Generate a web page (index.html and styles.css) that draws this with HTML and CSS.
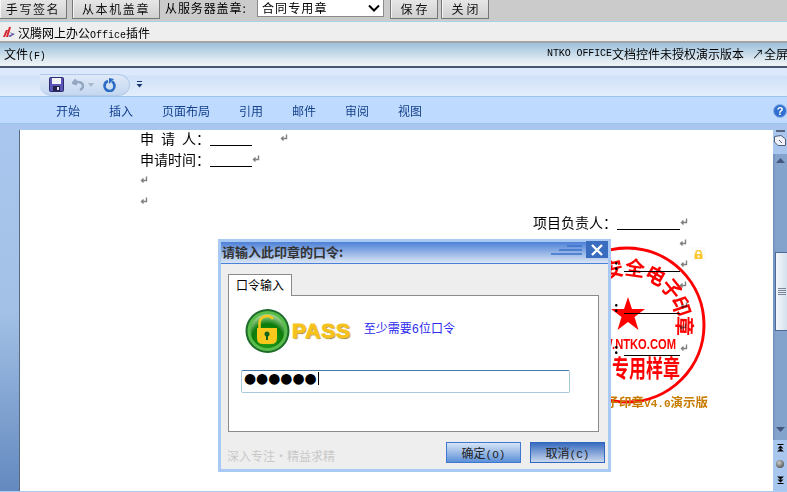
FILE: index.html
```html
<!DOCTYPE html>
<html lang="zh">
<head>
<meta charset="utf-8">
<title>汉腾网上办公Office插件</title>
<link rel="stylesheet" href="styles.css">
</head>
<body>
<svg class="defs" width="0" height="0" aria-hidden="true">
  <symbol id="ret" viewBox="0 0 8 8"><path d="M6.500 0.500V4.500H1.500M3.500 2.500L1.500 4.500L3.500 6.500" fill="none" stroke="#808080" stroke-width="1.400"/></symbol>
</svg>
<div class="page">
  <header class="toolbar">
    <button class="tb-btn b1">手写签名</button>
    <button class="tb-btn b2">从本机盖章</button>
    <span class="tb-label">从服务器盖章:</span>
    <div class="tb-select"><span>合同专用章</span>
      <svg class="chev" width="12" height="8" viewBox="0 0 12 8"><path d="M1 1.500L6 6.500L11 1.500" fill="none" stroke="#000" stroke-width="2"/></svg>
    </div>
    <button class="tb-btn b3">保存</button>
    <button class="tb-btn b3">关闭</button>
  </header>
  <div class="titlebar">
    <svg width="14" height="12" viewBox="0 0 14 12"><path d="M1 11L4 4L6 4L3 11Z" fill="#d8232a"/><path d="M4 11L7 1L9 1L6 11Z" fill="#d8232a"/><path d="M7 6L13 8L8 11L6 10L10 8Z" fill="#6a5aa8"/></svg>
    <span>汉腾网上办公<span class="mono">Office</span>插件</span>
  </div>
  <nav class="menubar">
    <span>文件<span class="mono sm">(F)</span></span>
    <span class="menu-right"><span class="mono">NTKO OFFICE</span>文档控件未授权演示版本<span class="fs">↗全屏</span></span>
  </nav>
  <div class="qat">
    <div class="qat-pill">
      <svg width="15" height="15" viewBox="0 0 15 15"><rect x="0.500" y="0.500" width="14" height="14" rx="1" fill="#5b55b5" stroke="#2a2a70"/><rect x="3" y="1" width="9" height="6" fill="#f2f4fa"/><rect x="4" y="9" width="7" height="5" fill="#22224a"/><rect x="8" y="10" width="2" height="3" fill="#e8e8f2"/></svg>
      <svg class="undo" width="13" height="13" viewBox="0 0 13 13"><path d="M4 1.500L1 5L5 6.500M1.500 5C6 3 11 4 11 8C11 10 10 11 8 12" fill="none" stroke="#93a6c2" stroke-width="2.400"/></svg>
      <svg class="caret" width="6" height="4" viewBox="0 0 6 4"><path d="M0 0H6L3 4Z" fill="#a9b7cc"/></svg>
      <svg class="redo" width="14" height="14" viewBox="0 0 14 14"><path d="M5 3C2 4 1.500 6 1.500 8A5 5 0 0 0 11.500 8C11.500 6 10.500 4.500 9 3.500" fill="none" stroke="#2b6bc4" stroke-width="2.600"/><path d="M6 0V6L11 1Z" fill="#2b6bc4"/></svg>
    </div>
    <svg class="qat-more" width="7" height="7" viewBox="0 0 7 7"><path d="M1 0.500H6" stroke="#1d3a70"/><path d="M0.500 3H6.500L3.500 6.500Z" fill="#1d3a70"/></svg>
  </div>
  <div class="tabs">
    <span class="tab t1">开始</span>
    <span class="tab t2">插入</span>
    <span class="tab t3">页面布局</span>
    <span class="tab t4">引用</span>
    <span class="tab t4">邮件</span>
    <span class="tab t4">审阅</span>
    <span class="tab t4">视图</span>
    <svg class="help" width="14" height="14" viewBox="0 0 14 14"><circle cx="7" cy="7" r="6.500" fill="#2f6fd0" stroke="#8fb2e4"/><text x="7" y="11" text-anchor="middle" class="help-q">?</text></svg>
  </div>
  <div class="ruler-strip"></div>
  <main class="workspace">
    <div class="margin"></div>
    <div class="doc">
      <div class="row"><span class="spaced">申 请 人：</span><span class="blank w42"></span><svg class="ret r-gap"><use href="#ret"/></svg></div>
      <div class="row"><span>申请时间：</span><span class="blank w42"></span><svg class="ret"><use href="#ret"/></svg></div>
      <div class="row"><svg class="ret"><use href="#ret"/></svg></div>
      <div class="row"><svg class="ret"><use href="#ret"/></svg></div>
      <div class="row right"><span>项目负责人：</span><span class="blank w63"></span><svg class="ret"><use href="#ret"/></svg></div>
      <div class="row far"><svg class="ret"><use href="#ret"/></svg></div>
      <div class="row line-row"><span class="bold-colon">:</span><span class="blank w56"></span><svg class="ret"><use href="#ret"/></svg></div>
      <div class="row far"><svg class="ret"><use href="#ret"/></svg></div>
      <div class="row line-row"><span class="bold-colon">:</span><span class="blank w56"></span><svg class="ret"><use href="#ret"/></svg></div>
      <div class="row far"><svg class="ret"><use href="#ret"/></svg></div>
      <div class="row line-row"><span class="bold-colon">:</span><span class="blank w56"></span><svg class="ret"><use href="#ret"/></svg></div>
    </div>
    <aside class="scrollbar">
      <div class="split"><span class="split-bar"></span>
        <svg width="12" height="11" viewBox="0 0 12 11"><path d="M0.500 1.500L7 0.500L11.500 4V10.500H4L0.500 7Z" fill="#eef2f8" stroke="#50607a"/><path d="M5 5L8 8" stroke="#50607a"/></svg>
      </div>
      <div class="sb-track">
        <svg class="sb-up" width="9" height="5" viewBox="0 0 9 5"><path d="M0 5L4.500 0L9 5Z" fill="#45577f"/></svg>
        <div class="sb-thumb"><i></i><i></i><i></i><i></i></div>
        <svg class="sb-down" width="9" height="5" viewBox="0 0 9 5"><path d="M0 0L4.500 5L9 0Z" fill="#45577f"/></svg>
      </div>
      <div class="sb-browse">
        <svg width="7" height="8" viewBox="0 0 7 8"><path d="M0.500 0.500H6.500" stroke="#000"/><path d="M3.500 1.500L0.500 4.500H6.500ZM3.500 4.500L0 7.500H7Z" fill="#000"/></svg>
        <span class="sb-dot"></span>
        <svg width="7" height="8" viewBox="0 0 7 8"><path d="M0.500 7.500H6.500" stroke="#000"/><path d="M3.500 6.500L0.500 3.500H6.500ZM3.500 3.500L0 0.500H7Z" fill="#000"/></svg>
      </div>
    </aside>
  </main>
  <svg class="stamp" width="180" height="175" viewBox="537 240 180 175">
    <circle cx="627" cy="325" r="77" fill="none" stroke="#f00" stroke-width="3"/>
    <text class="st-arc" x="627" y="275" text-anchor="middle" transform="rotate(-14 627 325)">安</text>
    <text class="st-arc" x="627" y="275" text-anchor="middle" transform="rotate(8 627 325)">全</text>
    <text class="st-arc" x="627" y="275" text-anchor="middle" transform="rotate(30 627 325)">电</text>
    <text class="st-arc" x="627" y="275" text-anchor="middle" transform="rotate(51 627 325)">子</text>
    <text class="st-arc" x="627" y="275" text-anchor="middle" transform="rotate(71 627 325)">印</text>
    <text class="st-arc" x="627" y="275" text-anchor="middle" transform="rotate(91 627 325)">章</text>
    <path d="M628 297L632 309H645L634.500 317L638.500 330L628 322L617.500 330L621.500 317L611 309H624Z" fill="#f00"/>
    <text x="581" y="349" class="st-com" textLength="95" lengthAdjust="spacingAndGlyphs">WWW.NTKO.COM</text>
    <text x="612" y="377" class="st-big" textLength="68" lengthAdjust="spacingAndGlyphs">专用样章</text>
    <text x="708" y="407" text-anchor="end" class="st-demo">全电子印章<tspan class="st-v">V4.0</tspan>演示版</text>
  </svg>
  <div class="lock"><svg width="9" height="9" viewBox="0 0 9 9"><rect x="0.500" y="4" width="8" height="5" fill="#fcc62d"/><path d="M2 4V2.500A2.500 2 0 0 1 7 2.500V4" fill="none" stroke="#fcc62d" stroke-width="1.500"/><rect x="3.500" y="5.500" width="2" height="2" fill="#fff"/></svg></div>

  <section class="dialog">
    <div class="dlg-title">
      <span>请输入此印章的口令:</span>
      <svg class="dlg-lines" width="31" height="11" viewBox="0 0 31 11"><path d="M16 1H31M8 5H31M0 9H31" stroke="#3a73cc" stroke-width="1.500"/></svg>
      <button class="dlg-close"><svg width="12" height="12" viewBox="0 0 12 12"><path d="M1 1L11 11M11 1L1 11" stroke="#fff" stroke-width="2.400"/></svg></button>
    </div>
    <div class="dlg-body">
      <div class="dlg-tabs"><span class="dlg-tab">口令输入</span></div>
      <div class="dlg-panel">
        <div class="pass-row">
          <svg class="pass-logo" width="45" height="46" viewBox="0 0 45 46">
            <defs><radialGradient id="g" cx="50%" cy="75%" r="70%"><stop offset="0" stop-color="#2ea81e"/><stop offset="0.65" stop-color="#0a7a0a"/><stop offset="1" stop-color="#9ad08f"/></radialGradient></defs>
            <circle cx="22.500" cy="23" r="22" fill="#1c6b2a"/>
            <circle cx="22.500" cy="23" r="20" fill="#58bd4a"/>
            <circle cx="22.500" cy="23" r="17" fill="url(#g)"/>
            <path d="M14.500 20V15A7.500 7 0 0 1 28 11" fill="none" stroke="#f8c91c" stroke-width="2.500"/>
            <path d="M12 20H32V30Q32 36 26 36H18Q12 36 12 30Z" fill="#f8c91c"/>
            <circle cx="22" cy="26" r="2.500" fill="#14651c"/><rect x="21" y="27" width="2" height="5" fill="#14651c"/>
          </svg>
          <span class="pass-word">PASS</span>
          <span class="pass-hint">至少需要<span class="mono-hint">6</span>位口令</span>
        </div>
        <div class="pwd"><span class="dots">●●●●●●</span><span class="caret-bar"></span></div>
      </div>
    </div>
    <div class="dlg-foot">
      <span class="motto">深入专注·精益求精</span>
      <button class="dlg-btn ok">确定<span class="mono-u">(O)</span></button>
      <button class="dlg-btn cancel">取消<span class="mono-u">(C)</span></button>
    </div>
  </section>
</div>
</body>
</html>
```
FILE: styles.css
```css
* { box-sizing: border-box; }
html, body { margin: 0; padding: 0; }
body { width: 787px; height: 492px; overflow: hidden; background: #fff; font-family: "Noto Sans CJK SC", "Liberation Sans", sans-serif; font-size: 12px; color: #000; }
button { border-radius: 0; }
.defs { position: absolute; }
.mono { font-family: "Liberation Mono", "Noto Sans CJK SC", monospace; font-size: 11px; }
.mono.sm { font-size: 10px; }
.page { position: relative; width: 787px; height: 492px; overflow: hidden; display: flex; flex-direction: column; }

.toolbar { height: 22px; flex: none; background: #cbcbcb; border-bottom: 1px solid #a9d3ea; display: flex; align-items: flex-start; padding-right: 10px; overflow: hidden; }
.tb-btn { height: 19px; border: 1px solid #777; border-top: 0; background: linear-gradient(#e6e6e6, #d0d0d0); box-shadow: inset 1px 0 #f5f5f5; font: 12px/16px "Noto Sans CJK SC", sans-serif; letter-spacing: 1.6px; padding: 0; color: #111; }
.b1 { width: 68px; margin-left: -1px; }
.b2 { width: 88px; margin-left: 5px; }
.b3 { width: 48px; margin-left: 3px; letter-spacing: 3px; padding-left: 3px; }
.tb-label { margin-left: 5px; width: 92px; font-size: 12px; line-height: 16px; letter-spacing: 0.9px; }
.tb-select { width: 127px; height: 17px; background: #fff; border: 1px solid #8a8a8a; border-top: 0; display: flex; align-items: center; justify-content: space-between; padding: 0 3px 1px 4px; font-size: 12px; letter-spacing: 1.1px; margin-right: 3px; }
.chev { flex: none; }

.titlebar { height: 21px; flex: none; background: #eee; border-bottom: 2px solid #a3a3a3; display: flex; align-items: center; gap: 2px; padding: 1px 0 0 2px; font-size: 12px; }
.titlebar .mono { font-size: 10px; }

.menubar { height: 25px; flex: none; background: linear-gradient(#9cc0dc, #dce8f0 70%, #f0f4f6); border-bottom: 2px solid #46566c; display: flex; justify-content: space-between; align-items: center; padding: 0 0 2px 4px; white-space: nowrap; }
.menubar span { font-size: 12px; }
.menubar .mono { font-size: 10px; letter-spacing: -0.1px; }
.menu-right { display: flex; align-items: center; width: 240px; flex: none; }
.fs { margin-left: 8px; }

.qat { height: 29px; flex: none; background: linear-gradient(#dce9fc 0, #dce9fc 7px, #cfe1f8 8px, #e3eefc 100%); border-bottom: 1px solid #9dc2ec; display: flex; align-items: center; padding: 5px 0 0 40px; }
.qat-pill { width: 90px; height: 22px; background: linear-gradient(#dfe9f8, #c4d7f0); border: 1px solid #b3cbe8; border-left: 0; border-radius: 0 12px 12px 12px / 0 11px 11px 11px; display: flex; align-items: center; padding-left: 9px; }
.undo { margin-left: 8px; }
.caret { margin-left: 3px; }
.redo { margin-left: 9px; }
.qat-more { margin-left: 6px; }

.tabs { height: 27px; flex: none; background: #bfdaff; border-bottom: 1px solid #9dc2ec; display: flex; align-items: center; padding: 3px 0 2px 56px; color: #15428b; font-size: 12px; white-space: nowrap; }
.tab { flex: none; }
.t1, .t2 { width: 53px; }
.t3 { width: 77px; }
.t4 { width: 53px; }
.help { margin-left: 322px; flex: none; }
.help-q { font: bold 11px "Liberation Sans", sans-serif; fill: #fff; }

.ruler-strip { height: 6px; flex: none; background: #a9c7ee; }

.workspace { flex: 1; display: flex; min-height: 0; border-bottom: 1px solid #a9cdf5; }
.margin { width: 20px; flex: none; background: linear-gradient(#a9c7ee, #a3c1e6 50%, #6389bf); border-right: 1px solid #5a6a80; }
.doc { flex: 1; background: #fff; padding-left: 120px; font-size: 14px; color: #000; position: relative; overflow: hidden; }
.row { height: 21px; display: flex; align-items: center; line-height: 18px; padding-bottom: 5px; white-space: nowrap; }
.row span { flex: none; }
.spaced { word-spacing: 3.900px; }
.bold-colon { font-weight: bold; }
.blank { height: 14px; border-bottom: 1px solid #000; display: block; margin-top: 2px; }
.w42 { width: 42px; }
.w63 { width: 63px; }
.w56 { width: 56px; margin-left: 5px; }
.right { margin-left: 393px; }
.far { margin-left: 539px; }
.line-row { margin-left: 474px; }
.ret { width: 8px; height: 8px; flex: none; }
.r-gap { margin-left: 28px; }

.scrollbar { width: 14px; flex: none; background: #84a3cc; display: flex; flex-direction: column; }
.split { height: 24px; flex: none; background: #a9c7ee; display: flex; flex-direction: column; align-items: center; gap: 3px; }
.split-bar { display: block; width: 9px; height: 2px; background: #55657f; }
.sb-track { flex: 1; display: flex; flex-direction: column; align-items: center; background: linear-gradient(90deg, #6e90bf, #84a3cc 3px); padding-top: 4px; }
.sb-thumb { width: 12px; height: 79px; margin: 89px 0 0 2px; flex: none; border: 1px solid #4f6a96; border-right: 0; background: linear-gradient(90deg, #f3f6fb, #d5e0ee); display: flex; flex-direction: column; align-items: center; justify-content: center; gap: 1px; }
.sb-thumb i { display: block; width: 8px; height: 1px; background: #7a8698; }
.sb-down { margin-top: 96px; }
.sb-browse { height: 51px; flex: none; background: #a9c7ee; display: flex; flex-direction: column; align-items: center; gap: 8px; padding-top: 4px; }
.sb-dot { display: block; width: 8px; height: 8px; border-radius: 50%; background: radial-gradient(circle at 40% 35%, #ccc, #333); }

.stamp { position: absolute; left: 537px; top: 240px; mix-blend-mode: multiply; }
.st-arc { font: bold 20px "Noto Sans CJK SC", sans-serif; fill: #f00; }
.st-com { font: bold 15px "Liberation Sans", sans-serif; fill: #f00; }
.st-big { font: bold 24px "Noto Sans CJK SC", sans-serif; fill: #f00; }
.st-demo { font: bold 12.500px "Noto Sans CJK SC", sans-serif; fill: #c77c00; }
.st-v { font: bold 11px "Liberation Mono", monospace; }
.lock { position: absolute; left: 691px; top: 247px; width: 15px; height: 15px; background: #fbfbfb; display: flex; align-items: center; justify-content: center; }

.dialog { position: absolute; left: 218px; top: 239px; width: 393px; height: 233px; background: #eee; border: 3px solid #a9c9f5; display: flex; flex-direction: column; }
.dlg-title { height: 22px; flex: none; display: flex; align-items: flex-start; background: linear-gradient(#4d80d6, #dbe6f5); border-bottom: 1px solid #4a80d8; padding: 0 0 0 1px; font-size: 13px; font-weight: bold; color: #333; }
.dlg-title span { flex: 1; line-height: 20px; }
.dlg-lines { margin: 3px 4px 0 0; flex: none; }
.dlg-close { width: 22px; height: 17px; flex: none; margin-top: -1px; border: 0; padding: 0; background: #3a6cc0; display: flex; align-items: center; justify-content: center; }
.dlg-body { flex: none; padding: 10px 9px 0 7px; }
.dlg-tabs { height: 21px; display: flex; }
.dlg-tab { width: 64px; height: 22px; border: 1px solid #8a8a8f; border-bottom: 0; background: #fff; text-align: center; line-height: 20px; font-size: 12px; position: relative; z-index: 1; }
.dlg-panel { height: 137px; background: #fff; border: 1px solid #8a8a8f; padding: 12px 28px 0 12px; }
.pass-row { display: flex; align-items: center; height: 46px; }
.pass-logo { flex: none; margin-left: 4px; }
.pass-word { font: 900 21px "Liberation Sans", sans-serif; color: #f6c31c; text-shadow: 1px 1px 1px #8a7a50; letter-spacing: 0.800px; margin-left: 2px; -webkit-text-stroke: 1px #f6c31c; }
.pass-hint { margin-left: 13px; color: #2a2af0; font-size: 12px; margin-top: -6px; }
.mono-hint { font-family: "Liberation Mono", monospace; }
.pwd { height: 23px; width: 329px; margin-top: 16px; border: 1px solid #a8c8dc; border-top-color: #4a7ba8; border-radius: 2px; display: flex; align-items: center; padding: 0 0 6px 2px; background: #fff; }
.dots { font: 13.900px/1 "DejaVu Sans", sans-serif; color: #000; }
.caret-bar { display: block; width: 1px; height: 13px; background: #000; margin-left: 1px; }
.dlg-foot { flex: 1; display: flex; align-items: flex-start; padding: 10px 3px 0 6px; }
.motto { color: #c9c9c9; font-size: 12px; flex: 1; margin-top: 5px; line-height: 18px; }
.dlg-btn { width: 75px; height: 21px; margin-left: 9px; border: 1px solid #3f78d0; padding: 0; font: 12px/17px "Noto Sans CJK SC", sans-serif; color: #222; }
.mono-u { font: 11px "Liberation Mono", monospace; }
.ok { background: linear-gradient(#d7e4f6, #5c90d8); }
.cancel { background: linear-gradient(#3a6cc0, #c8d8ee); border-color: #2f66c0; }
```
